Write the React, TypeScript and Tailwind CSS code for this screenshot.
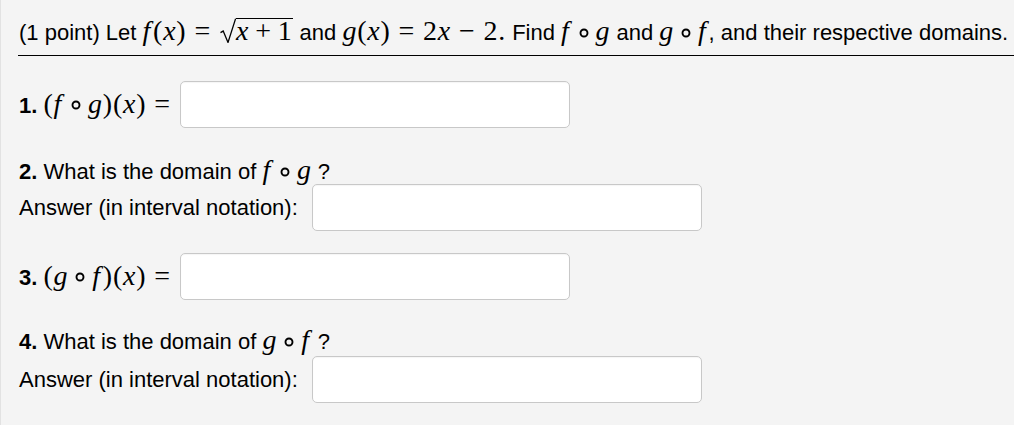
import React from "react";

const Var = ({ c }: { c: string }) => (
  <span className={c === "f" ? "italic pr-[2px]" : "italic"}>{c}</span>
);

const Math = ({ children }: { children: React.ReactNode }) => (
  <span className="font-['Liberation_Serif',serif] text-[28px] tracking-[0.75px] leading-[24px] whitespace-nowrap">
    {children}
  </span>
);

const Comp = () => (
  <svg width="10" height="10" viewBox="0 0 10 10" className="inline-block mx-[7px] align-[0.08em]">
    <circle cx="5" cy="5" r="3.5" fill="none" stroke="#000" strokeWidth="1.9" />
  </svg>
);

const Op = ({ c }: { c: string }) => <span className="mx-[8px]">{c}</span>;

const Sqrt = ({ children }: { children: React.ReactNode }) => (
  <span className="relative inline-block pl-[16px] ml-[1px]">
    <svg
      className="absolute left-0 top-0 h-full w-[16px]"
      viewBox="0 0 16 23"
      preserveAspectRatio="none"
    >
      <path d="M0.5 13.5 L3.2 12 L8 22.5 L15.6 0.6" stroke="#000" strokeWidth="1.3" fill="none" />
    </svg>
    <span className="inline-block border-t-[1.3px] border-black pt-[1px] leading-[21px] pr-[1px]">{children}</span>
  </span>
);

const Box = () => (
  <input
    readOnly
    aria-label="answer"
    className="h-[47px] w-[390px] rounded-[5px] border border-[#c8c8c8] bg-white shadow-[inset_0_1px_1px_rgba(0,0,0,0.04)]"
  />
);

export default function App() {
  return (
    <div className="min-h-[425px] w-full bg-[#f4f4f4] border-l border-[#e2e2e2] text-black font-['Liberation_Sans',Arial,sans-serif] text-[22px] overflow-hidden">
      <div className="pl-[17px]">
        <div className="pt-[18px] pl-px h-[43px] leading-[24px] whitespace-nowrap">
          (1 point) Let{" "}
          <Math>
            <Var c="f" />(<Var c="x" />)<Op c="=" />
            <Sqrt>
              <Var c="x" /><span className="mx-[6px]">+</span>1
            </Sqrt>
          </Math>{" "}
          and{" "}
          <Math>
            <Var c="g" />(<Var c="x" />)<Op c="=" />2<Var c="x" /><Op c="−" />2.
          </Math>{" "}
          Find{" "}
          <Math>
            <Var c="f" />
            <Comp />
            <Var c="g" />
          </Math>{" "}
          and{" "}
          <Math>
            <Var c="g" />
            <Comp />
            <Var c="f" />
          </Math>
          , and their respective domains.
        </div>

        <div className="mt-[12px] border-t border-black" />

        <div className="pl-px">
          <div className="mt-[25px] h-[47px] flex items-center">
            <span className="whitespace-nowrap leading-[24px]">
              <b>1.</b>{" "}
              <Math>
                (<Var c="f" />
                <Comp />
                <Var c="g" />)(<Var c="x" />)<Op c="=" />
              </Math>
            </span>
            <span className="ml-[1px] flex">
              <Box />
            </span>
          </div>

          <div className="mt-[30px] h-[24px] leading-[24px] whitespace-nowrap">
            <b>2.</b> What is the domain of{" "}
            <Math>
              <Var c="f" />
              <Comp />
              <Var c="g" />
            </Math>{" "}
            ?
          </div>

          <div className="mt-[2px] h-[47px] flex items-center">
            <span className="whitespace-nowrap leading-[24px]">Answer (in interval notation):</span>
            <span className="ml-[14px] flex">
              <Box />
            </span>
          </div>

          <div className="mt-[22px] h-[47px] flex items-center">
            <span className="whitespace-nowrap leading-[24px]">
              <b>3.</b>{" "}
              <Math>
                (<Var c="g" />
                <Comp />
                <Var c="f" />)(<Var c="x" />)<Op c="=" />
              </Math>
            </span>
            <span className="ml-[1px] flex">
              <Box />
            </span>
          </div>

          <div className="mt-[28px] h-[24px] leading-[24px] whitespace-nowrap">
            <b>4.</b> What is the domain of{" "}
            <Math>
              <Var c="g" />
              <Comp />
              <Var c="f" />
            </Math>{" "}
            ?
          </div>

          <div className="mt-[4px] h-[47px] flex items-center">
            <span className="whitespace-nowrap leading-[24px]">Answer (in interval notation):</span>
            <span className="ml-[14px] flex">
              <Box />
            </span>
          </div>
        </div>
      </div>
    </div>
  );
}
